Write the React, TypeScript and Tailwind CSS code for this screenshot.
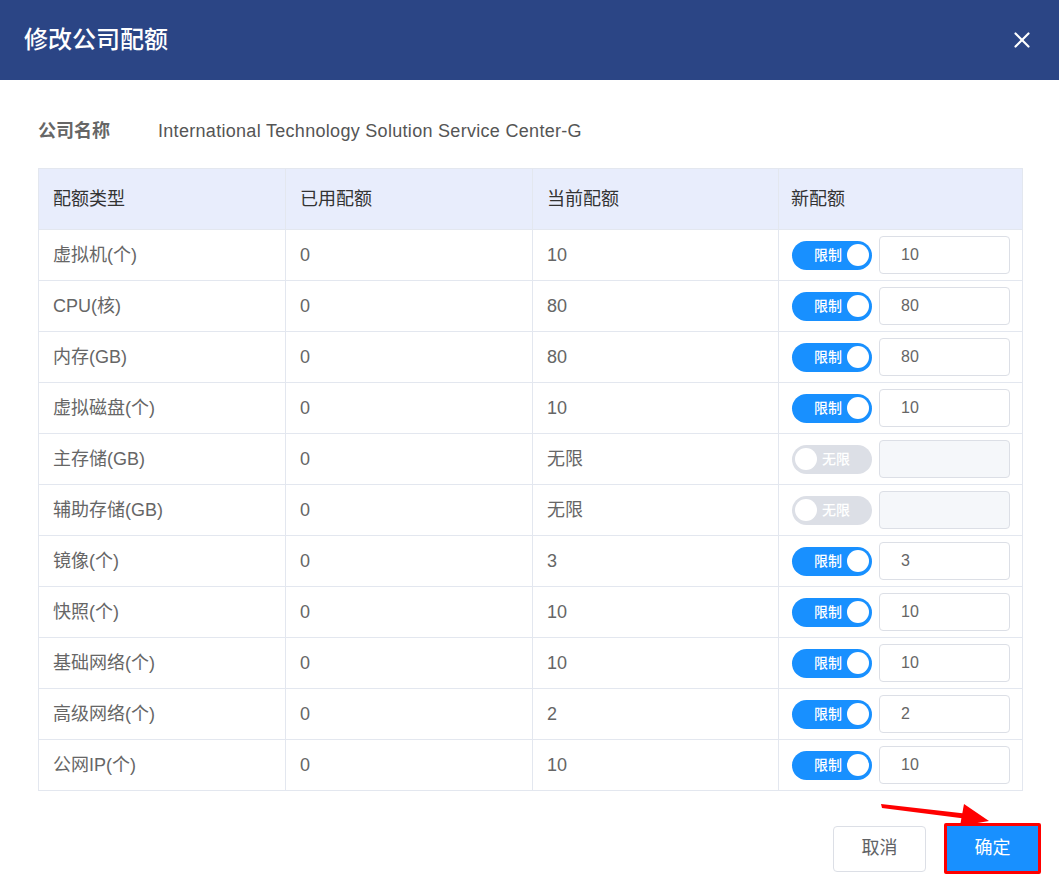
import { X } from "lucide-react";

type Row = {
  name: string;
  used: string;
  current: string;
  limited: boolean;
  value: string;
};

const rows: Row[] = [
  { name: "虚拟机(个)", used: "0", current: "10", limited: true, value: "10" },
  { name: "CPU(核)", used: "0", current: "80", limited: true, value: "80" },
  { name: "内存(GB)", used: "0", current: "80", limited: true, value: "80" },
  { name: "虚拟磁盘(个)", used: "0", current: "10", limited: true, value: "10" },
  { name: "主存储(GB)", used: "0", current: "无限", limited: false, value: "" },
  { name: "辅助存储(GB)", used: "0", current: "无限", limited: false, value: "" },
  { name: "镜像(个)", used: "0", current: "3", limited: true, value: "3" },
  { name: "快照(个)", used: "0", current: "10", limited: true, value: "10" },
  { name: "基础网络(个)", used: "0", current: "10", limited: true, value: "10" },
  { name: "高级网络(个)", used: "0", current: "2", limited: true, value: "2" },
  { name: "公网IP(个)", used: "0", current: "10", limited: true, value: "10" },
];

function Toggle({ on }: { on: boolean }) {
  if (on) {
    return (
      <div className="w-[80px] h-[29px] rounded-full bg-[#1890ff] flex items-center justify-end pr-[3px] shrink-0">
        <span className="text-white text-[14px] font-medium mr-[5px]">限制</span>
        <span className="w-[22px] h-[22px] rounded-full bg-white" />
      </div>
    );
  }
  return (
    <div className="w-[80px] h-[29px] rounded-full bg-[#dcdfe6] flex items-center pl-[3px] shrink-0">
      <span className="w-[22px] h-[22px] rounded-full bg-white" />
      <span className="text-white text-[14px] font-medium ml-[5px]">无限</span>
    </div>
  );
}

export default function App() {
  return (
    <div
      className="w-[1059px] h-[893px] bg-white flex flex-col relative"
      style={{ fontFamily: '"Liberation Sans", "Noto Sans CJK SC", sans-serif' }}
    >
      {/* Header */}
      <header className="h-[80px] bg-[#2b4585] flex items-center justify-between pl-[24px] pr-[24px] shrink-0">
        <h1 className="text-white text-[24px] font-medium">修改公司配额</h1>
        <X className="w-[26px] h-[26px] text-white" strokeWidth={2} />
      </header>

      <div className="pl-[38px] pr-[36px] pt-[38px]">
        {/* Company name */}
        <div className="h-[26px] flex items-center text-[18px]">
          <span className="font-bold text-[#666] w-[120px]">公司名称</span>
          <span className="text-[#555] tracking-[0.3px]">International Technology Solution Service Center-G</span>
        </div>

        {/* Table */}
        <div className="mt-[24px] border border-[#e3e7ef] text-[18px]">
          <div className="grid grid-cols-[247px_247px_246px_1fr] h-[60px] bg-[#e8edfc] text-[#333]">
            <div className="flex items-center px-[14px] border-r border-[#e3e7ef]">配额类型</div>
            <div className="flex items-center px-[14px] border-r border-[#e3e7ef]">已用配额</div>
            <div className="flex items-center px-[14px] border-r border-[#e3e7ef]">当前配额</div>
            <div className="flex items-center px-[12px]">新配额</div>
          </div>
          {rows.map((r) => (
            <div
              key={r.name}
              className="grid grid-cols-[247px_247px_246px_1fr] h-[51px] border-t border-[#e3e7ef] text-[#666]"
            >
              <div className="flex items-center px-[14px] border-r border-[#e3e7ef]">{r.name}</div>
              <div className="flex items-center px-[14px] border-r border-[#e3e7ef]">{r.used}</div>
              <div className="flex items-center px-[14px] border-r border-[#e3e7ef]">{r.current}</div>
              <div className="flex items-center pl-[13px] gap-[7px]">
                <Toggle on={r.limited} />
                <div
                  className={`w-[131px] h-[38px] rounded-[4px] border border-[#dcdfe6] flex items-center pl-[21px] text-[16px] text-[#666] ${
                    r.limited ? "bg-white" : "bg-[#f5f7fa]"
                  }`}
                >
                  {r.value}
                </div>
              </div>
            </div>
          ))}
        </div>
      </div>

      {/* Footer */}
      <div className="flex justify-end items-center gap-[18px] pr-[18px] mt-[32px]">
        <button className="w-[93px] h-[46px] rounded-[4px] border border-[#dcdfe6] bg-white text-[18px] text-[#606266]">
          取消
        </button>
        <div className="border-[3px] border-[#ff0000] rounded-[2px]">
          <button className="w-[91px] h-[45px] bg-[#1890ff] text-white text-[18px]">确定</button>
        </div>
      </div>

      {/* Annotation arrow */}
      <svg
        className="absolute left-0 top-0 pointer-events-none"
        width="1059"
        height="893"
        viewBox="0 0 1059 893"
      >
        <polygon points="881,804 882,808 968,819 969,814" fill="#ff0000" />
        <polygon points="964,804 989,821 960,826" fill="#ff0000" />
      </svg>
    </div>
  );
}
